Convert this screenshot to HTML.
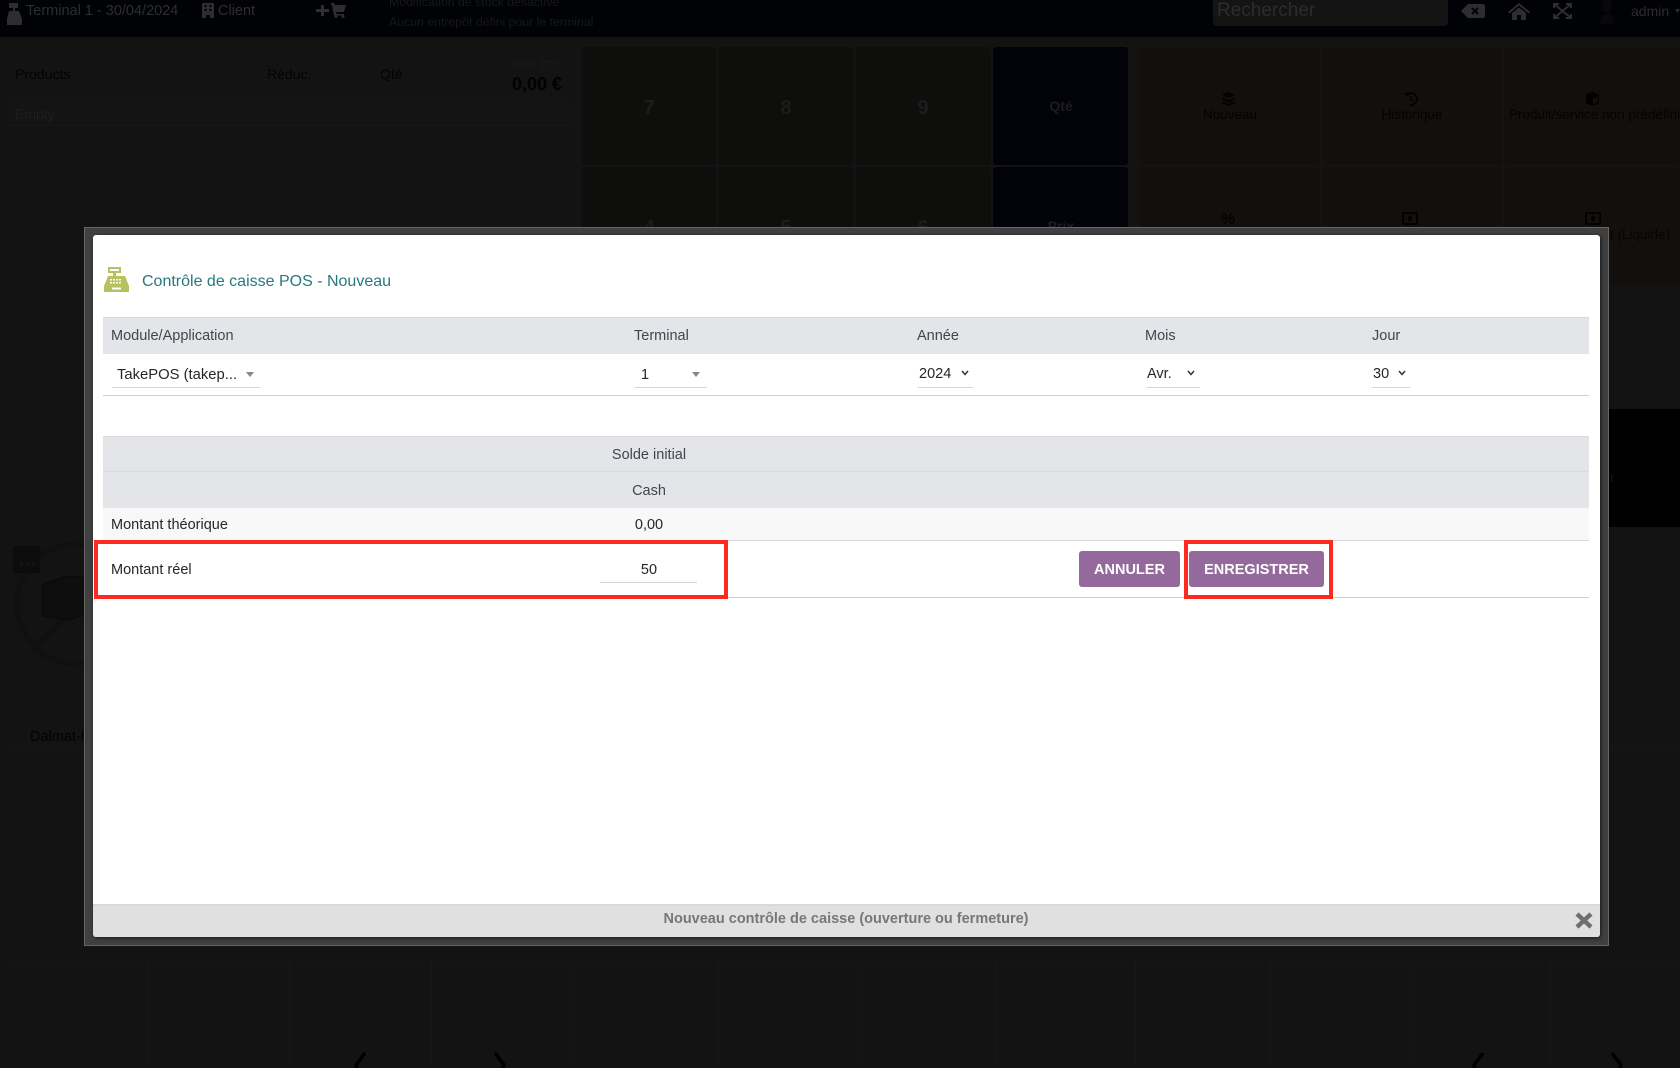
<!DOCTYPE html>
<html lang="fr">
<head>
<meta charset="utf-8">
<title>Contrôle de caisse POS</title>
<style>
html,body{margin:0;padding:0;width:1680px;height:1068px;overflow:hidden;background:#131313;font-family:"Liberation Sans",sans-serif}
#page{position:relative;width:1680px;height:1068px;overflow:hidden;background:#131313}
.a{position:absolute}
.t{position:absolute;white-space:nowrap;line-height:20px;font-size:14px}
.c{transform:translateX(-50%)}
.r{transform:translateX(-100%)}
.cell{position:absolute;border-radius:3px}
.num{background:#0e0e0c}
.blue{background:#02030a}
.act{background:#130f0d}
.hl{position:absolute;border:4px solid #ff2a1f;box-sizing:border-box}
.ul{position:absolute;height:1px;background:#d5d5d8}
.btn{position:absolute;background:#936a9b;color:#fff;font-weight:bold;font-size:14.5px;line-height:38px;height:36px;text-align:center;border-radius:3px}
.tb{color:#444450;font-size:14.5px}
.td{color:#262626;font-size:14.5px}
svg{position:absolute;display:block}
</style>
</head>
<body>
<div id="page">

<!-- top bar -->
<div class="a" style="left:0;top:0;width:1680px;height:37px;background:#010206"></div>
<svg style="left:7px;top:3px" width="15" height="22" viewBox="0 0 15 22" fill="#2e2e2e"><path d="M2 0h9v5H8v3h4l3 8v6H0v-6l2-8h4V5H2z"/></svg>
<div class="t" style="left:26px;top:1px;color:#2e2e2e;font-size:14.5px">Terminal 1 - 30/04/2024</div>
<svg style="left:202px;top:3px" width="12" height="15" viewBox="0 0 12 15" fill="#2e2e2e"><path d="M0 0h12v15H8v-3H4v3H0zM2.500 2v2h2V2zm5 0v2h2V2zm-5 4v2h2V6zm5 0v2h2V6z" fill-rule="evenodd"/></svg>
<div class="t" style="left:218px;top:1px;color:#2e2e2e;font-size:14.5px">Client</div>
<svg style="left:316px;top:3px" width="30" height="15" viewBox="0 0 30 15" fill="#2e2e2e"><path d="M5 2h3v4h5v3H8v4H5V9H0V6h5z"/><path d="M15 0h3l1 2h11l-2 7H20l.5 2H28v1.500H18L16 2h-1z"/><circle cx="20" cy="13.500" r="1.500"/><circle cx="27" cy="13.500" r="1.500"/></svg>
<div class="t" style="left:389px;top:-8px;color:#181818;font-size:12.3px">Modification de stock désactivé</div>
<div class="t" style="left:389px;top:12px;color:#181818;font-size:12.3px">Aucun entrepôt défini pour le terminal</div>
<div class="a" style="left:1213px;top:-4px;width:235px;height:30px;background:#141414;border-radius:4px"></div>
<div class="t" style="left:1217px;top:1px;color:#2c2c2c;font-size:19px">Rechercher</div>
<svg style="left:1461px;top:4px" width="24" height="14" viewBox="0 0 24 14"><path d="M7 0h15a2 2 0 0 1 2 2v10a2 2 0 0 1-2 2H7L0 7z" fill="#2e2e2e"/><path d="M11 4l6 6M17 4l-6 6" stroke="#010206" stroke-width="2"/></svg>
<svg style="left:1508px;top:3px" width="22" height="17" viewBox="0 0 22 17" fill="#2e2e2e"><path d="M11 0l11 9-1.200 1.500L11 2.500 1.200 10.500 0 9z"/><path d="M4 10l7-5.500 7 5.500v7h-5v-5H9v5H4z"/></svg>
<svg style="left:1553px;top:3px" width="19" height="16" viewBox="0 0 19 16" fill="none" stroke="#2e2e2e" stroke-width="2"><path d="M1 1l17 14M18 1L1 15M1 5V1h5M18 5V1h-5M1 11v4h5M18 11v4h-5"/></svg>
<svg style="left:1600px;top:0" width="14" height="24" viewBox="0 0 14 24" fill="#080808"><ellipse cx="7" cy="6" rx="5" ry="7"/><path d="M0 24c0-8 3-10 7-10s7 2 7 10z"/></svg>
<div class="t" style="left:1631px;top:1px;color:#2c2c2c;font-size:14px">admin</div>
<svg style="left:1675px;top:9px" width="5" height="5" viewBox="0 0 5 5" fill="#2c2c2c"><path d="M0 0h5L2.500 4z"/></svg>

<!-- left panel -->
<div class="t" style="left:15px;top:64px;color:#030303">Products</div>
<div class="t" style="left:267px;top:64px;color:#030303">Réduc.</div>
<div class="t" style="left:380px;top:64px;color:#030303">Qté</div>
<div class="t r" style="left:562px;top:55px;color:#1a1a1a;font-size:12px">Total TTC</div>
<div class="t r" style="left:562px;top:74px;color:#020202;font-size:18px;font-weight:bold">0,00 €</div>
<div class="a" style="left:7px;top:101px;width:563px;height:25px;background:#141414;border-bottom:1px solid #171717;box-sizing:border-box"></div>
<div class="t" style="left:15px;top:104px;color:#1e1e1e">Empty</div>

<!-- numpad -->
<div class="cell num" style="left:582px;top:47px;width:134px;height:118px"></div>
<div class="cell num" style="left:718px;top:47px;width:135px;height:118px"></div>
<div class="cell num" style="left:856px;top:47px;width:135px;height:118px"></div>
<div class="cell blue" style="left:993px;top:47px;width:135px;height:118px"></div>
<div class="cell num" style="left:582px;top:167px;width:134px;height:118px"></div>
<div class="cell num" style="left:718px;top:167px;width:135px;height:118px"></div>
<div class="cell num" style="left:856px;top:167px;width:135px;height:118px"></div>
<div class="cell blue" style="left:993px;top:167px;width:135px;height:118px"></div>
<div class="t c" style="left:649px;top:98px;color:#1c1c1c;font-size:20px;font-weight:bold">7</div>
<div class="t c" style="left:786px;top:98px;color:#1c1c1c;font-size:20px;font-weight:bold">8</div>
<div class="t c" style="left:923px;top:98px;color:#1c1c1c;font-size:20px;font-weight:bold">9</div>
<div class="t c" style="left:1061px;top:96px;color:#1c1c22;font-size:14px;font-weight:bold">Qté</div>
<div class="t c" style="left:649px;top:218px;color:#1c1c1c;font-size:20px;font-weight:bold">4</div>
<div class="t c" style="left:786px;top:218px;color:#1c1c1c;font-size:20px;font-weight:bold">5</div>
<div class="t c" style="left:923px;top:218px;color:#1c1c1c;font-size:20px;font-weight:bold">6</div>
<div class="t c" style="left:1061px;top:216px;color:#1c1c22;font-size:14px;font-weight:bold">Prix</div>

<!-- action buttons -->
<div class="cell act" style="left:1140px;top:47px;width:180px;height:118px"></div>
<div class="cell act" style="left:1323px;top:47px;width:179px;height:118px"></div>
<div class="cell act" style="left:1504px;top:47px;width:176px;height:118px"></div>
<div class="cell act" style="left:1140px;top:167px;width:180px;height:118px"></div>
<div class="cell act" style="left:1323px;top:167px;width:179px;height:118px"></div>
<div class="cell act" style="left:1504px;top:167px;width:176px;height:118px"></div>
<svg style="left:1222px;top:92px" width="13" height="14" viewBox="0 0 13 14" fill="#020202"><path d="M6.500 0L13 3 6.500 6 0 3z"/><path d="M0 5.500l6.500 3 6.500-3V7.500L6.500 10.500 0 7.500z"/><path d="M0 9l6.500 3 6.500-3v2L6.500 14 0 11z"/></svg>
<div class="t c" style="left:1230px;top:105px;color:#030303;font-size:13.500px">Nouveau</div>
<svg style="left:1404px;top:92px" width="14" height="14" viewBox="0 0 14 14" fill="none" stroke="#020202" stroke-width="1.700"><path d="M3 2.500A6 6 0 1 1 6 13M1 1l2 2 3-1M7 4v3.500l2 1.500"/></svg>
<div class="t c" style="left:1412px;top:105px;color:#030303;font-size:13.500px">Historique</div>
<svg style="left:1586px;top:92px" width="13" height="14" viewBox="0 0 13 14" fill="#020202"><path d="M6.500 0L13 2.500v9L6.500 14 0 11.500v-9zM7 6.500v5.500l4.500-1.800V4.800z" fill-rule="evenodd"/></svg>
<div class="t" style="left:1509px;top:105px;color:#030303;font-size:13.500px">Produit/service non prédéfini</div>
<div class="t c" style="left:1228px;top:210px;color:#020202;font-size:16px;font-weight:bold">%</div>
<svg style="left:1402px;top:212px" width="16" height="13" viewBox="0 0 16 13" fill="none" stroke="#020202" stroke-width="2"><rect x="1" y="1" width="14" height="11" rx="1"/><ellipse cx="8" cy="6.500" rx="2" ry="3" fill="#020202" stroke="none"/></svg>
<svg style="left:1585px;top:212px" width="16" height="13" viewBox="0 0 16 13" fill="none" stroke="#020202" stroke-width="2"><rect x="1" y="1" width="14" height="11" rx="1"/><ellipse cx="8" cy="6.500" rx="2" ry="3" fill="#020202" stroke="none"/></svg>
<div class="t" style="left:1610px;top:225px;color:#060504;font-size:13.500px">t (Liquide)</div>

<!-- right black block -->
<div class="a" style="left:1600px;top:409px;width:80px;height:118px;background:#000"></div>
<div class="t" style="left:1610px;top:467px;color:#141414;font-size:14px">r</div>

<!-- product tile -->
<svg style="left:10px;top:535px" width="80" height="140" viewBox="0 0 80 140" fill="none"><circle cx="67" cy="69" r="60" stroke="#101010" stroke-width="5"/><path d="M22 115L62 76" stroke="#101010" stroke-width="5"/><path d="M33 50l22-8 25 0v35l-22 8-25-4z" fill="#0e0e0e" stroke="#0b0b0b" stroke-width="2"/></svg>
<div class="a" style="left:13px;top:546px;width:27px;height:27px;background:#0c0c0c"></div>
<div class="a" style="left:20px;top:563px;width:3px;height:3px;background:#171717;border-radius:50%"></div>
<div class="a" style="left:26px;top:563px;width:3px;height:3px;background:#171717;border-radius:50%"></div>
<div class="a" style="left:32px;top:563px;width:3px;height:3px;background:#171717;border-radius:50%"></div>
<div class="t" style="left:30px;top:727px;color:#030303;font-size:14.500px">Dalmat-l</div>

<!-- faint grid -->
<div class="a" style="left:8px;top:750px;width:1672px;height:1px;background:#161616"></div>
<div class="a" style="left:8px;top:960px;width:1672px;height:1px;background:#161616"></div>
<div class="a" style="left:147px;top:960px;width:1px;height:108px;background:#171717"></div>
<div class="a" style="left:289px;top:960px;width:1px;height:108px;background:#171717"></div>
<div class="a" style="left:431px;top:960px;width:1px;height:108px;background:#171717"></div>
<div class="a" style="left:570px;top:960px;width:1px;height:108px;background:#171717"></div>
<div class="a" style="left:718px;top:960px;width:1px;height:108px;background:#171717"></div>
<div class="a" style="left:858px;top:960px;width:1px;height:108px;background:#171717"></div>
<div class="a" style="left:995px;top:960px;width:1px;height:108px;background:#171717"></div>
<div class="a" style="left:1135px;top:960px;width:1px;height:108px;background:#171717"></div>
<div class="a" style="left:1270px;top:960px;width:1px;height:108px;background:#171717"></div>
<div class="a" style="left:1410px;top:960px;width:1px;height:108px;background:#171717"></div>
<div class="a" style="left:1550px;top:960px;width:1px;height:108px;background:#171717"></div>

<!-- chevrons -->
<svg style="left:352px;top:1052px" width="16" height="16" viewBox="0 0 16 16" fill="none" stroke="#000" stroke-width="3.500"><path d="M13 1L4 13l1 3"/></svg>
<svg style="left:492px;top:1052px" width="16" height="16" viewBox="0 0 16 16" fill="none" stroke="#000" stroke-width="3.500"><path d="M3 1l9 12-1 3"/></svg>
<svg style="left:1470px;top:1052px" width="16" height="16" viewBox="0 0 16 16" fill="none" stroke="#000" stroke-width="3.500"><path d="M13 1L4 13l1 3"/></svg>
<svg style="left:1609px;top:1052px" width="16" height="16" viewBox="0 0 16 16" fill="none" stroke="#000" stroke-width="3.500"><path d="M3 1l9 12-1 3"/></svg>

<!-- modal frame -->
<div class="a" style="left:84px;top:227px;width:1525px;height:719px;background:#404040;border:1px solid #666;box-sizing:border-box"></div>
<div class="a" style="left:93px;top:235px;width:1507px;height:702px;background:#fff;border-radius:3px;box-shadow:1px 1px 4px rgba(0,0,0,.65)"></div>

<!-- title -->
<svg style="left:104px;top:267px" width="25" height="25" viewBox="0 0 25 25" fill="#b7c15d"><path d="M4 0h13v6h-5v3h-3V6H4zM6 2v2h9V2z" fill-rule="evenodd"/><path d="M4 9h17l4 10v5a1 1 0 0 1-1 1H1a1 1 0 0 1-1-1v-5z"/><g fill="#fff"><rect x="6" y="12" width="2" height="1.500"/><rect x="9" y="12" width="2" height="1.500"/><rect x="12" y="12" width="2" height="1.500"/><rect x="15" y="12" width="2" height="1.500"/><rect x="6" y="15" width="2" height="1.500"/><rect x="9" y="15" width="2" height="1.500"/><rect x="12" y="15" width="2" height="1.500"/><rect x="15" y="15" width="2" height="1.500"/><rect x="8" y="20.500" width="9" height="2"/></g></svg>
<div class="t" style="left:142px;top:272px;color:#26797c;font-size:16px">Contrôle de caisse POS - Nouveau</div>

<!-- table 1 -->
<div class="a" style="left:103px;top:317px;width:1486px;height:37px;background:#e4e5e9;border-top:1px solid #dcdcdf;box-sizing:border-box"></div>
<div class="t tb" style="left:111px;top:326px">Module/Application</div>
<div class="t tb" style="left:634px;top:326px">Terminal</div>
<div class="t tb" style="left:917px;top:326px">Année</div>
<div class="t tb" style="left:1145px;top:326px">Mois</div>
<div class="t tb" style="left:1372px;top:326px">Jour</div>
<div class="t td" style="left:117px;top:365px;font-size:14.8px">TakePOS (takep...</div>
<svg style="left:246px;top:372px" width="8" height="5" viewBox="0 0 8 5" fill="#888"><path d="M0 0h8L4 5z"/></svg>
<div class="ul" style="left:112px;top:387px;width:148px"></div>
<div class="t td" style="left:641px;top:365px">1</div>
<svg style="left:692px;top:372px" width="8" height="5" viewBox="0 0 8 5" fill="#888"><path d="M0 0h8L4 5z"/></svg>
<div class="ul" style="left:634px;top:387px;width:73px"></div>
<div class="t td" style="left:919px;top:364px">2024</div>
<svg style="left:961px;top:370px" width="8" height="6" viewBox="0 0 8 6" fill="none" stroke="#333" stroke-width="1.500"><path d="M1 1l3 3.500L7 1"/></svg>
<div class="ul" style="left:918px;top:387px;width:55px"></div>
<div class="t td" style="left:1147px;top:364px">Avr.</div>
<svg style="left:1187px;top:370px" width="8" height="6" viewBox="0 0 8 6" fill="none" stroke="#333" stroke-width="1.500"><path d="M1 1l3 3.500L7 1"/></svg>
<div class="ul" style="left:1146px;top:387px;width:54px"></div>
<div class="t td" style="left:1373px;top:364px">30</div>
<svg style="left:1398px;top:370px" width="8" height="6" viewBox="0 0 8 6" fill="none" stroke="#333" stroke-width="1.500"><path d="M1 1l3 3.500L7 1"/></svg>
<div class="ul" style="left:1372px;top:387px;width:38px"></div>
<div class="a" style="left:103px;top:395px;width:1486px;height:1px;background:#cfcfcf"></div>

<!-- table 2 -->
<div class="a" style="left:103px;top:436px;width:1486px;height:36px;background:#e4e5e9;border-top:1px solid #dcdcdf;border-bottom:1px solid #dadbdf;box-sizing:border-box"></div>
<div class="a" style="left:103px;top:472px;width:1486px;height:35px;background:#e4e5e9"></div>
<div class="a" style="left:103px;top:507px;width:1486px;height:34px;background:#f8f8f8;border-top:1px solid #e8e8e8;border-bottom:1px solid #d8d8d8;box-sizing:border-box"></div>
<div class="t tb c" style="left:649px;top:445px">Solde initial</div>
<div class="t tb c" style="left:649px;top:481px">Cash</div>
<div class="t td" style="left:111px;top:515px">Montant théorique</div>
<div class="t td c" style="left:649px;top:515px">0,00</div>
<div class="t td" style="left:111px;top:560px">Montant réel</div>
<div class="t td c" style="left:649px;top:560px">50</div>
<div class="ul" style="left:600px;top:582px;width:97px"></div>
<div class="a" style="left:103px;top:597px;width:1486px;height:1px;background:#cfcfcf"></div>

<!-- buttons -->
<div class="btn" style="left:1079px;top:551px;width:101px">ANNULER</div>
<div class="btn" style="left:1189px;top:551px;width:135px">ENREGISTRER</div>

<!-- highlights -->
<div class="hl" style="left:94px;top:540px;width:634px;height:59px"></div>
<div class="hl" style="left:1184px;top:540px;width:149px;height:59px"></div>

<!-- footer -->
<div class="a" style="left:93px;top:904px;width:1507px;height:33px;background:#e0e0e0;border-top:2px solid #d8d8d8;box-sizing:border-box;border-radius:0 0 3px 3px"></div>
<div class="t c" style="left:846px;top:909px;color:#777;font-size:14.5px;font-weight:bold">Nouveau contrôle de caisse (ouverture ou fermeture)</div>
<svg style="left:1575px;top:912px" width="18" height="17" viewBox="0 0 18 17" fill="none" stroke="#6f6f6f" stroke-width="4.500"><path d="M2 2l14 13M16 2L2 15"/></svg>

</div>
</body>
</html>
